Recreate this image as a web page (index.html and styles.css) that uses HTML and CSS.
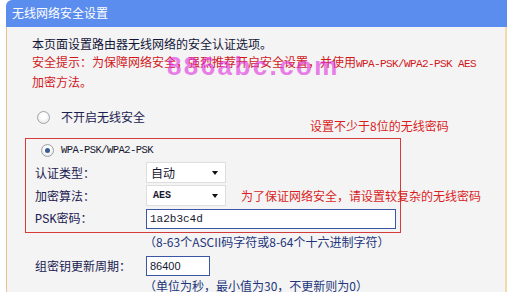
FILE: index.html
```html
<!DOCTYPE html>
<html lang="zh-CN">
<head>
<meta charset="utf-8">
<title>无线网络安全设置</title>
<link rel="stylesheet" href="styles.css">
</head>
<body>
<div class="panel">
  <div class="hd">无线网络安全设置</div>
  <div class="bd">
    <p class="intro">本页面设置路由器无线网络的安全认证选项。</p>
    <p class="warn">安全提示：为保障网络安全，强烈推荐开启安全设置，并使用<span class="mono warn-mono">WPA-PSK/WPA2-PSK AES</span><br>加密方法。</p>
    <div class="opt"><span class="radio"></span><span class="opt-text">不开启无线安全</span></div>
    <div class="wpa">
      <div class="opt opt-in"><span class="radio on"></span><span class="opt-text mono wpa-name">WPA-PSK/WPA2-PSK</span></div>
      <div class="row"><span class="lbl">认证类型：</span><span class="sel"><span>自动</span><span class="arrow"></span></span></div>
      <div class="row"><span class="lbl">加密算法：</span><span class="sel"><span class="mono sel-mono">AES</span><span class="arrow"></span></span><span class="note">为了保证网络安全，请设置较复杂的无线密码</span></div>
      <div class="row"><span class="lbl"><span class="lat">PSK</span>密码：</span><span class="inp inp-wide mono psk">1a2b3c4d</span></div>
    </div>
    <p class="hint">（8-63个ASCII码字符或8-64个十六进制字符）</p>
    <div class="row row-out"><span class="lbl">组密钥更新周期：</span><span class="inp inp-short">86400</span></div>
    <p class="hint">（单位为秒，最小值为30，不更新则为0）</p>
    <span class="note note-top">设置不少于8位的无线密码</span>
    <span class="wm">886abc.com</span>
  </div>
</div>
</body>
</html>
```

FILE: styles.css
```css
html, body {
  margin: 0;
  padding: 0;
  background: #ffffff;
}
body {
  font-family: "Noto Sans CJK SC", "Noto Sans", sans-serif;
  font-size: 12px;
  color: #1a2050;
  overflow: hidden;
}
p { margin: 0; }

.panel {
  margin-left: 6px;
  width: 501px;
}
.hd {
  height: 27px;
  background: #5b8def;
  border-radius: 6px 0 0 0;
  color: #ffffff;
  font-size: 12px;
  line-height: 26px;
  padding-left: 6px;
}
.bd {
  position: relative;
  height: 265px;
  background: #f4f4f4;
  border-left: 1px solid #e6c48a;
  border-right: 2px solid #f2dba8;
  padding: 8px 0 0 18px;
}
.intro {
  margin-left: 7px;
  line-height: 18px;
  color: #121538;
}
.warn {
  margin-left: 7px;
  line-height: 18px;
  color: #d0181c;
}
.mono {
  font-family: "Liberation Mono", "DejaVu Sans Mono", monospace;
  font-size: 10px;
}
.warn-mono {
  font-size: 11px;
  letter-spacing: -0.6px;
}
.opt {
  display: flex;
  align-items: center;
  height: 20px;
  margin-top: 16px;
  padding-left: 12px;
}
.opt-text { margin-left: 11px; line-height: 20px; }
.opt-in {
  margin-top: 0;
  height: 22px;
  padding-left: 6px;
}
.opt-in .opt-text { margin-left: 7px; }
.wpa-name {
  font-size: 10.5px;
  letter-spacing: -0.55px;
  color: #15172e;
}

.radio {
  position: relative;
  width: 11px;
  height: 11px;
  border-radius: 50%;
  border: 1px solid #9ea3a8;
  background: radial-gradient(circle at 50% 40%, #ffffff 30%, #dcdcdc 100%);
  flex: none;
}
.radio.on::after {
  content: "";
  position: absolute;
  left: 3px;
  top: 3px;
  width: 5px;
  height: 5px;
  border-radius: 50%;
  background: #3b5b8c;
}

.wpa {
  width: 376px;
  box-sizing: border-box;
  margin-top: 11px;
  border: 1px solid #d43c3c;
  padding: 0 0 2px 9px;
}
.row {
  display: flex;
  align-items: center;
  height: 23px;
  white-space: nowrap;
}
.lbl {
  width: 111px;
  flex: none;
  line-height: 18px;
}
.lat {
  font-family: "Liberation Mono", monospace;
  font-size: 12px;
}
.sel {
  box-sizing: border-box;
  width: 80px;
  height: 21px;
  background: #ffffff;
  border: 1px solid #dedede;
  display: flex;
  align-items: center;
  justify-content: space-between;
  padding: 0 7px 0 4px;
  color: #15172e;
  flex: none;
}
.sel-mono { font-weight: bold; font-size: 10px; margin-left: 2px; }
.arrow {
  width: 0;
  height: 0;
  border-top: 4px solid #111;
  border-left: 3.5px solid transparent;
  border-right: 3.5px solid transparent;
}
.note {
  margin-left: 15px;
  color: #d81e1e;
  line-height: 18px;
}
.inp {
  box-sizing: border-box;
  height: 20px;
  background: #ffffff;
  border: 1px solid #3a56a4;
  padding-left: 3px;
  line-height: 18px;
  color: #15172e;
  flex: none;
}
.inp-wide { width: 250px; }
.psk { font-size: 11px; }
.inp-short {
  width: 64px;
  font-family: "Liberation Sans", sans-serif;
  font-size: 11px;
}
.hint {
  margin-left: 119px;
  line-height: 18px;
  color: #22357a;
}
.row-out {
  margin-top: 3px;
  padding-left: 10px;
}
.note-top {
  position: absolute;
  left: 303px;
  top: 90px;
  margin: 0;
}
.wm {
  position: absolute;
  left: 160px;
  top: 24px;
  font-family: "Liberation Sans", sans-serif;
  font-weight: bold;
  font-size: 26px;
  letter-spacing: 2.4px;
  color: #e030e0;
  opacity: 0.6;
  line-height: 30px;
}
```
